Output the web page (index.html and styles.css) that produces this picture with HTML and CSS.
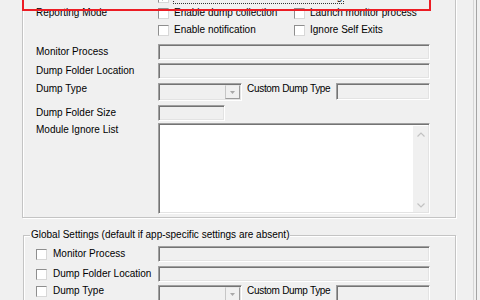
FILE: index.html
```html
<!DOCTYPE html>
<html lang="en">
<head>
    <meta charset="UTF-8">
    <title>Monitor settings</title>
    <link rel="stylesheet" href="styles.css">
</head>
<body>
    <div class="page">
        <div class="main">
            <fieldset class="group group-app">
                <div class="row row-top">
                    <span class="label"></span>
                    <div class="controls">
                        <label class="check">
                            <span class="box">
                                <svg width="9" height="9" viewBox="0 0 9 9"><path d="M1.5 4.5 L3.5 6.5 L7.5 2" fill="none" stroke="#222" stroke-width="1.4"/></svg>
                            </span>
                            <span class="focus">Enable Client Process Exit Monitoring</span>
                        </label>
                    </div>
                </div>
                <div class="row row-reporting">
                    <span class="label">Reporting Mode</span>
                    <div class="controls">
                        <label class="check col"><span class="box"></span>Enable dump collection</label>
                        <label class="check"><span class="box"></span>Launch monitor process</label>
                    </div>
                </div>
                <div class="row row-notify">
                    <span class="label"></span>
                    <div class="controls">
                        <label class="check col"><span class="box"></span>Enable notification</label>
                        <label class="check"><span class="box"></span>Ignore Self Exits</label>
                    </div>
                </div>
                <div class="row row-monitor">
                    <span class="label">Monitor Process</span>
                    <div class="controls"><span class="edit wide"></span></div>
                </div>
                <div class="row row-folder">
                    <span class="label">Dump Folder Location</span>
                    <div class="controls"><span class="edit wide"></span></div>
                </div>
                <div class="row row-type">
                    <span class="label">Dump Type</span>
                    <div class="controls">
                        <span class="combo">
                            <span class="drop"><svg width="5" height="3" viewBox="0 0 5 3"><path d="M0 0 H5 L2.5 3 Z" fill="#a8a8a8"/></svg></span>
                        </span>
                        <span class="custom-label">Custom Dump Type</span>
                        <span class="edit custom"></span>
                    </div>
                </div>
                <div class="row row-size">
                    <span class="label">Dump Folder Size</span>
                    <div class="controls"><span class="edit size"></span></div>
                </div>
                <div class="row row-ignore">
                    <span class="label">Module Ignore List</span>
                    <div class="controls">
                        <span class="memo">
                            <span class="scroll">
                                <svg width="8" height="5" viewBox="0 0 8 5"><path d="M0.5 4.5 L4 1 L7.5 4.5" fill="none" stroke="#c2c2c2" stroke-width="1.2"/></svg>
                                <svg width="8" height="5" viewBox="0 0 8 5"><path d="M0.5 0.5 L4 4 L7.5 0.5" fill="none" stroke="#c2c2c2" stroke-width="1.2"/></svg>
                            </span>
                        </span>
                    </div>
                </div>
            </fieldset>

            <fieldset class="group group-global">
                <legend>Global Settings (default if app-specific settings are absent)</legend>
                <div class="row">
                    <label class="label check"><span class="box"></span>Monitor Process</label>
                    <div class="controls"><span class="edit wide"></span></div>
                </div>
                <div class="row row-g-folder">
                    <label class="label check"><span class="box"></span>Dump Folder Location</label>
                    <div class="controls"><span class="edit wide"></span></div>
                </div>
                <div class="row row-type row-g-type">
                    <label class="label check"><span class="box"></span>Dump Type</label>
                    <div class="controls">
                        <span class="combo">
                            <span class="drop"><svg width="5" height="3" viewBox="0 0 5 3"><path d="M0 0 H5 L2.5 3 Z" fill="#a8a8a8"/></svg></span>
                        </span>
                        <span class="custom-label">Custom Dump Type</span>
                        <span class="edit custom"></span>
                    </div>
                </div>
            </fieldset>

            <div class="highlight"></div>
        </div>
        <div class="edge"></div>
    </div>
</body>
</html>
```

FILE: styles.css
```css
body {
    margin: 0;
    background: #f0f0f0;
    font: 10px/12px "Liberation Sans", Arial, sans-serif;
    color: #000;
}

.page {
    display: flex;
    height: 300px;
    overflow: hidden;
}

.main {
    position: relative;
    flex: 0 0 473px;
}

.edge {
    width: 2px;
    border-left: 1px solid #d6d6d6;
    border-right: 1px solid #a4a4a4;
}

/* group boxes */
.group {
    box-sizing: border-box;
    min-width: 0;
    margin: 0 0 0 22px;
    width: 434px;
    border: 1px solid #c4c4c4;
    box-shadow: inset 1px 1px 0 #fff, 1px 1px 0 #fff;
    padding: 0 25px 3px 13px;
}

.group-app {
    margin-top: -20px;
    padding-top: 9px;
}

.group-global {
    margin: 11px 0 0 23px;
    width: 433px;
    padding: 5px 25px 0 12px;
}

.group-global legend {
    margin-left: -6px;
    padding: 0 1px;
    line-height: 12px;
    background: #f0f0f0;
}

/* rows */
.row {
    display: flex;
    align-items: center;
    height: 16px;
}

.label {
    flex: 0 0 122px;
    white-space: nowrap;
}

.controls {
    flex: 1;
    display: flex;
    align-items: center;
    min-width: 0;
}

.row-top { height: 16px; margin-top: -1px; }
.row-notify { margin-top: 1px; }
.row-monitor { margin-top: 6px; }
.row-folder { margin-top: 3px; }
.row-type {
    margin-top: 4px;
    height: 18px;
    align-items: flex-start;
}
.row-type .controls { align-items: flex-start; }
.row-size { margin-top: 4px; }
.row-ignore {
    margin-top: 2px;
    height: 91px;
    align-items: flex-start;
}
.row-ignore .label { margin-top: 1px; }
.row-g-folder { margin-top: 4px; }
.row-g-type { margin-top: 3px; }

/* checkboxes */
.check {
    display: flex;
    align-items: center;
    white-space: nowrap;
}

.check.col { width: 136px; }

.box {
    flex: none;
    width: 11px;
    height: 11px;
    box-sizing: border-box;
    margin-right: 5px;
    border: 1px solid;
    border-color: #8e8e8e #d8d8d8 #d8d8d8 #8e8e8e;
    background: #fff;
    display: flex;
    align-items: center;
    justify-content: center;
}

.group-global .box { margin-right: 6px; }

.focus {
    padding: 0 1px;
    outline: 1px dotted #333;
}

/* edit fields */
.edit, .combo, .memo {
    box-sizing: border-box;
    height: 16px;
    border: 1px solid;
    border-color: #a0a0a0 #fff #fff #a0a0a0;
    box-shadow: inset 1px 1px 0 #747474, inset -1px -1px 0 #e3e3e3;
    background: #f0f0f0;
}

.wide { flex: 1; }
.size { width: 67px; }

.combo {
    width: 84px;
    height: 18px;
    padding: 1px;
    display: flex;
    justify-content: flex-end;
}

.drop {
    width: 15px;
    box-sizing: border-box;
    border: 1px solid;
    border-color: #e8e8e8 #9c9c9c #9c9c9c #c6c6c6;
    display: flex;
    align-items: center;
    justify-content: center;
}

.custom-label {
    width: 89px;
    margin-left: 5px;
    white-space: nowrap;
    letter-spacing: -0.3px;
}

.custom {
    flex: 1;
    height: 17px;
}

.memo {
    flex: 1;
    height: 91px;
    padding: 2px 1px 1px 0;
    background: #fff;
    display: flex;
    justify-content: flex-end;
}

.scroll {
    width: 15px;
    background: #f0f0f0;
    display: flex;
    flex-direction: column;
    justify-content: space-between;
    align-items: center;
    padding: 6px 0 4px;
}

/* red annotation drawn over the first row */
.highlight {
    position: absolute;
    left: 22px;
    top: -10px;
    width: 405px;
    height: 17px;
    border: 2px solid #ec1c24;
}
```
